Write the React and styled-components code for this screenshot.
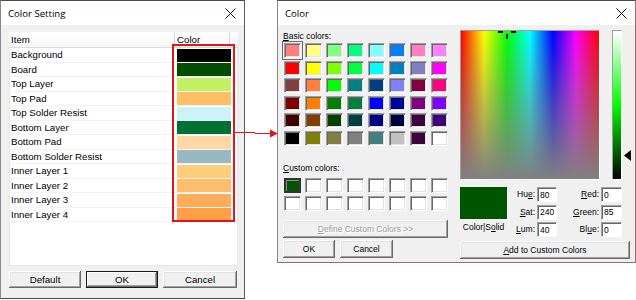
import React from "react";
import styled, { createGlobalStyle, css } from "styled-components";

const layers = [
  { name: "Background", color: "#000000" },
  { name: "Board", color: "#004f00" },
  { name: "Top Layer", color: "#c2f264" },
  { name: "Top Pad", color: "#ffc064" },
  { name: "Top Solder Resist", color: "#caf4f8" },
  { name: "Bottom Layer", color: "#007236" },
  { name: "Bottom Pad", color: "#ffd7a2" },
  { name: "Bottom Solder Resist", color: "#9ab8bf" },
  { name: "Inner Layer 1", color: "#ffcd7e" },
  { name: "Inner Layer 2", color: "#ffbc6c" },
  { name: "Inner Layer 3", color: "#ffad5a" },
  { name: "Inner Layer 4", color: "#ff9f48" },
];

const basic = [
  "#FF8080", "#FFFF80", "#80FF80", "#00FF80", "#80FFFF", "#0080FF", "#FF80C0", "#FF80FF",
  "#FF0000", "#FFFF00", "#80FF00", "#00FF40", "#00FFFF", "#0080C0", "#8080C0", "#FF00FF",
  "#804040", "#FF8040", "#00FF00", "#008080", "#004080", "#8080FF", "#800040", "#FF0080",
  "#800000", "#FF8000", "#008000", "#008040", "#0000FF", "#0000A0", "#800080", "#8000FF",
  "#400000", "#804000", "#004000", "#004040", "#000080", "#000040", "#400040", "#400080",
  "#000000", "#808000", "#808040", "#808080", "#408080", "#C0C0C0", "#400040", "#FFFFFF",
];

const custom = ["#005500", ...Array(15).fill("#ffffff")];

const GlobalStyle = createGlobalStyle`
  html, body {
    margin: 0;
    padding: 0;
    background: #fff;
  }
  body {
    width: 636px;
    height: 300px;
    overflow: hidden;
    font-family: "Liberation Sans", Arial, sans-serif;
    color: #000;
  }
`;

const Stage = styled.div`
  position: relative;
  display: flex;
  align-items: flex-start;
  width: 636px;
  height: 300px;
`;

const Dialog = styled.div`
  box-sizing: border-box;
  display: flex;
  flex-direction: column;
  background: #f0f0f0;
  width: ${(p) => p.$w}px;
  height: ${(p) => p.$h}px;
  border-left: 1px solid #8a8a8a;
  border-right: 1px solid ${(p) => p.$edge || "#5c5c5c"};
  border-bottom: 1px solid ${(p) => p.$edge || "#4a4a4a"};
  border-top: 1px solid #42523f;
`;

const Gap = styled.div`
  width: 32px;
  flex: none;
`;

const TitleBar = styled.div`
  height: 24px;
  flex: none;
  background: #fff;
  display: flex;
  align-items: center;
  justify-content: space-between;
  padding: 0 8px 0 7px;
  font-family: "Open Sans", "Liberation Sans", sans-serif;
  font-size: 9.6px;
`;

const CloseIcon = () => (
  <svg width="11" height="11" viewBox="0 0 11 11">
    <path d="M0.5 0.5 L10.5 10.5 M10.5 0.5 L0.5 10.5" stroke="#111" strokeWidth="1" />
  </svg>
);

/* ---------- left dialog ---------- */

const SettingBody = styled.div`
  flex: 1;
  display: flex;
  flex-direction: column;
  padding: 7px 6px 0 8px;
  font-size: 9.7px;
`;

const ListBox = styled.div`
  position: relative;
  height: 234px;
  background: #fff;
  box-shadow: inset 0 0 0 1px #e6e6e6;
`;

const HeaderRow = styled.div`
  display: flex;
  height: 15px;
  border-bottom: 1px solid #dcdcdc;
  background: linear-gradient(#fff, #f7f7f7);
`;

const HeaderCell = styled.div`
  box-sizing: border-box;
  width: ${(p) => p.$w}px;
  padding-left: 2px;
  line-height: 15px;
  border-right: 1px solid #d8d8d8;
`;

const Row = styled.div`
  display: flex;
  height: 14.5px;
  box-sizing: border-box;
  border-bottom: 1px solid #f3f3f3;
`;

const ItemCell = styled.div`
  width: 166px;
  padding-left: 2px;
  line-height: 13.5px;
  white-space: nowrap;
`;

const ColorCell = styled.div`
  width: 54px;
  padding-top: 0.5px;
  div {
    height: 13px;
    background: ${(p) => p.$color};
  }
`;

const Highlight = styled.div`
  position: absolute;
  left: 163px;
  top: 12px;
  width: 63px;
  height: 178px;
  box-sizing: border-box;
  border: 2.5px solid #e8141b;
  pointer-events: none;
`;

const ButtonRow = styled.div`
  display: flex;
  justify-content: space-between;
  margin-top: 5px;
  width: 228px;
`;

const ClassicButton = styled.button`
  box-sizing: border-box;
  width: ${(p) => p.$w}px;
  height: ${(p) => p.$h || 17}px;
  padding: 0;
  margin: 0;
  font-family: inherit;
  font-size: inherit;
  color: ${(p) => (p.disabled ? "#a0a0a0" : "#000")};
  text-shadow: ${(p) => (p.disabled ? "1px 1px 0 #fff" : "none")};
  background: #f0f0f0;
  border: none;
  box-shadow: inset -1px -1px #696969, inset 1px 1px #fff, inset -2px -2px #a0a0a0,
    inset 2px 2px #e3e3e3;
  ${(p) =>
    p.$default &&
    css`
      box-shadow: inset 0 0 0 1px #1a1a1a, inset -2px -2px #696969, inset 2px 2px #fff,
        inset -3px -3px #a0a0a0;
    `}
`;

/* ---------- right dialog ---------- */

const ColorBody = styled.div`
  flex: 1;
  display: flex;
  gap: 12px;
  padding: 0 5px 0 5px;
  font-size: 8.5px;
`;

const LeftPanel = styled.div`
  width: 165px;
  display: flex;
  flex-direction: column;
`;

const Label = styled.div`
  height: 12px;
  line-height: 12px;
  margin-top: ${(p) => p.$mt}px;
`;

const SwatchGrid = styled.div`
  display: grid;
  grid-template-columns: repeat(8, 17px);
  grid-auto-rows: 15px;
  column-gap: 4px;
  row-gap: ${(p) => p.$rg}px;
  margin-top: ${(p) => p.$mt}px;
  padding-left: 1px;
`;

const Swatch = styled.div`
  box-sizing: border-box;
  background: ${(p) => p.$color};
  border: 1px solid;
  border-color: #a0a0a0 #fff #fff #a0a0a0;
  box-shadow: inset 1px 1px #696969, inset -1px -1px #e3e3e3;
  ${(p) =>
    p.$focus &&
    css`
      outline: 1px solid #6a6a6a;
      outline-offset: 1px;
    `}
  ${(p) =>
    p.$picked &&
    css`
      border: 2px solid #333;
      box-shadow: inset 1px 1px #8a8a8a;
    `}
`;

const DefineButton = styled(ClassicButton)`
  margin-top: 9px;
`;

const PanelButtons = styled.div`
  display: flex;
  gap: 5px;
  margin-top: 2px;
`;

const RightPanel = styled.div`
  width: 171px;
  display: flex;
  flex-direction: column;
`;

const PickerRow = styled.div`
  display: flex;
  align-items: flex-start;
  margin-top: 5px;
`;

const Spectrum = styled.div`
  position: relative;
  width: 141px;
  height: 150px;
  box-sizing: border-box;
  border: 1px solid;
  border-color: #a0a0a0 #fff #fff #a0a0a0;
  background: linear-gradient(to bottom, rgba(128, 128, 128, 0), #808080),
    linear-gradient(to right, #f00, #ff0, #0f0, #0ff, #00f, #f0f, #f00);
`;

const Cross = styled.svg`
  position: absolute;
  left: 37px;
  top: 0;
`;

const LumBar = styled.div`
  margin-left: 12px;
  width: 10px;
  height: 150px;
  box-sizing: border-box;
  border: 1px solid;
  border-color: #a0a0a0 #fff #fff #a0a0a0;
  background: linear-gradient(to bottom, #fff, #00ff00 50%, #000);
`;

const LumArrow = styled.svg`
  margin-left: 2px;
  margin-top: 120px;
`;

const InfoRow = styled.div`
  display: flex;
  margin-top: 7px;
`;

const Solid = styled.div`
  width: 47px;
  display: flex;
  flex-direction: column;
  align-items: center;
  div {
    width: 47px;
    height: 32px;
    background: #005500;
  }
  span {
    margin-top: 3px;
    white-space: nowrap;
  }
`;

const FieldGrid = styled.div`
  display: grid;
  grid-template-columns: 28px 20px 40px 21px;
  grid-auto-rows: 15px;
  column-gap: 2px;
  row-gap: 2.5px;
`;

const FieldLabel = styled.label`
  text-align: right;
  line-height: 15px;
`;

const FieldInput = styled.input`
  box-sizing: border-box;
  width: 100%;
  height: 15px;
  margin: 0;
  padding: 0 0 0 2px;
  font-family: inherit;
  font-size: inherit;
  background: #fff;
  border: 1px solid;
  border-color: #a0a0a0 #fff #fff #a0a0a0;
  box-shadow: inset 1px 1px #696969;
  outline: none;
`;

const AddButton = styled(ClassicButton)`
  margin-top: 4px;
`;

const Connector = styled.svg`
  position: absolute;
  left: 235px;
  top: 128px;
`;

const fields = [
  ["Hu", "e", ":", "80", "", "R", "ed:", "0"],
  ["", "S", "at:", "240", "", "G", "reen:", "85"],
  ["", "L", "um:", "40", "Bl", "u", "e:", "0"],
];

export default function App() {
  return (
    <Stage>
      <GlobalStyle />
      <Dialog $w={245} $h={299}>
        <TitleBar>
          <span>Color Setting</span>
          <CloseIcon />
        </TitleBar>
        <SettingBody>
          <ListBox>
            <HeaderRow>
              <HeaderCell $w={166}>Item</HeaderCell>
              <HeaderCell $w={55}>Color</HeaderCell>
            </HeaderRow>
            {layers.map((l) => (
              <Row key={l.name}>
                <ItemCell>{l.name}</ItemCell>
                <ColorCell $color={l.color}>
                  <div />
                </ColorCell>
              </Row>
            ))}
            <Highlight />
          </ListBox>
          <ButtonRow>
            <ClassicButton $w={72}>Default</ClassicButton>
            <ClassicButton $w={72} $default>
              OK
            </ClassicButton>
            <ClassicButton $w={74}>Cancel</ClassicButton>
          </ButtonRow>
        </SettingBody>
      </Dialog>
      <Gap />
      <Dialog $w={359} $h={263} $edge="#9a6a66">
        <TitleBar>
          <span>Color</span>
          <CloseIcon />
        </TitleBar>
        <ColorBody>
          <LeftPanel>
            <Label $mt={5}>
              <u>B</u>asic colors:
            </Label>
            <SwatchGrid $mt={1} $rg={2.6}>
              {basic.map((c, i) => (
                <Swatch key={i} $color={c} $focus={i === 0} />
              ))}
            </SwatchGrid>
            <Label $mt={16}>
              <u>C</u>ustom colors:
            </Label>
            <SwatchGrid $mt={4} $rg={3}>
              {custom.map((c, i) => (
                <Swatch key={i} $color={c} $picked={i === 0} />
              ))}
            </SwatchGrid>
            <DefineButton $w={165} $h={18} disabled>
              <u>D</u>efine Custom Colors &gt;&gt;
            </DefineButton>
            <PanelButtons>
              <ClassicButton $w={52} $h={18}>
                OK
              </ClassicButton>
              <ClassicButton $w={53} $h={18}>
                Cancel
              </ClassicButton>
            </PanelButtons>
          </LeftPanel>
          <RightPanel>
            <PickerRow>
              <Spectrum>
                <Cross width="20" height="10" viewBox="0 0 20 10">
                  <rect x="0" y="0" width="5" height="2" fill="#000" />
                  <rect x="13" y="0" width="5" height="2" fill="#000" />
                  <rect x="8" y="3" width="2" height="5" fill="#000" />
                </Cross>
              </Spectrum>
              <LumBar />
              <LumArrow width="7" height="11" viewBox="0 0 7 11">
                <polygon points="0,5.5 7,0 7,11" fill="#000" />
              </LumArrow>
            </PickerRow>
            <InfoRow>
              <Solid>
                <div />
                <span>
                  Color|S<u>o</u>lid
                </span>
              </Solid>
              <FieldGrid>
                {fields.map((f, i) => (
                  <React.Fragment key={i}>
                    <FieldLabel>
                      {f[0]}
                      <u>{f[1]}</u>
                      {f[2]}
                    </FieldLabel>
                    <FieldInput readOnly value={f[3]} />
                    <FieldLabel>
                      {f[4]}
                      <u>{f[5]}</u>
                      {f[6]}
                    </FieldLabel>
                    <FieldInput readOnly value={f[7]} />
                  </React.Fragment>
                ))}
              </FieldGrid>
            </InfoRow>
            <AddButton $w={170} $h={18}>
              <u>A</u>dd to Custom Colors
            </AddButton>
          </RightPanel>
        </ColorBody>
      </Dialog>
      <Connector width="44" height="10" viewBox="0 0 44 10">
        <path d="M0 4.5 H20 V5.5 H36" stroke="#e8141b" strokeWidth="1" fill="none" />
        <polygon points="35,1.5 43,5.5 35,9.5" fill="#e8141b" />
      </Connector>
    </Stage>
  );
}
